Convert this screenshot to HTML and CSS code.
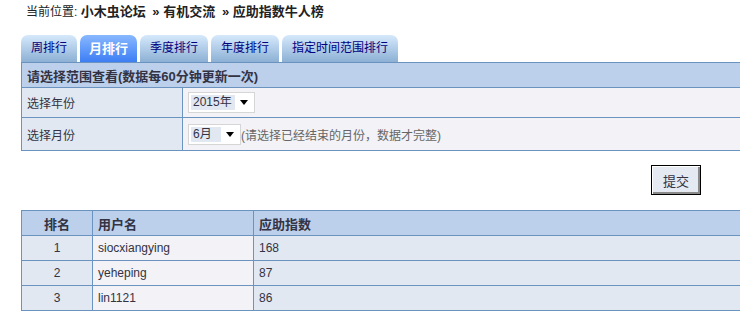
FILE: index.html
```html
<!DOCTYPE html>
<html lang="zh-CN">
<head>
    <meta charset="UTF-8">
    <title>应助指数牛人榜</title>
    <link rel="stylesheet" href="styles.css">
</head>
<body>
    <div class="crumb">当前位置: <b>小木虫论坛</b> &nbsp;<b>» 有机交流</b> &nbsp;<b>» 应助指数牛人榜</b></div>

    <div class="wrap">
        <div class="tabs">
            <a class="tab">周排行</a>
            <a class="tab active">月排行</a>
            <a class="tab">季度排行</a>
            <a class="tab">年度排行</a>
            <a class="tab">指定时间范围排行</a>
        </div>

        <table class="form">
            <tr>
                <th colspan="2">请选择范围查看(数据每60分钟更新一次)</th>
            </tr>
            <tr>
                <td class="label">选择年份</td>
                <td class="value">
                    <span class="select year"><span class="picked">2015年</span><i class="arrow"></i></span>
                </td>
            </tr>
            <tr>
                <td class="label">选择月份</td>
                <td class="value tall">
                    <span class="select month"><span class="picked">6月</span><i class="arrow"></i></span><span class="note">(请选择已经结束的月份，数据才完整)</span>
                </td>
            </tr>
        </table>

        <div class="actions">
            <button class="submit">提交</button>
        </div>

        <table class="rank">
            <tr>
                <th class="num">排名</th>
                <th class="user">用户名</th>
                <th>应助指数</th>
            </tr>
            <tr>
                <td class="num">1</td>
                <td class="user">siocxiangying</td>
                <td>168</td>
            </tr>
            <tr>
                <td class="num">2</td>
                <td class="user">yeheping</td>
                <td>87</td>
            </tr>
            <tr>
                <td class="num">3</td>
                <td class="user">lin1121</td>
                <td>86</td>
            </tr>
        </table>
    </div>
</body>
</html>
```

FILE: styles.css
```css
body {
    margin: 0;
    font-family: "Liberation Sans", "Noto Sans CJK SC", sans-serif;
    font-size: 12px;
    color: #333344;
    background-color: #fff;
    overflow: hidden;
}

b, th {
    font-size: 13px;
}

.crumb {
    padding: 4px 0 0 26px;
    line-height: 16px;
    color: #222;
}

.wrap {
    margin-left: 21px;
    width: 740px;
}

/* tabs */
.tabs {
    display: flex;
    gap: 3px;
    margin-top: 15px;
    height: 27px;
}

.tab {
    padding: 0 10px;
    line-height: 27px;
    border-radius: 7px 7px 0 0;
    background: linear-gradient(#d6e9fc, #8cb0d4);
    color: #000080;
    cursor: pointer;
}

.tab.active {
    padding: 0 9px;
    background: linear-gradient(#88b8ff, #3d7ef4);
    color: #fff;
    font-size: 13px;
    font-weight: bold;
}

/* range form */
table {
    border-collapse: collapse;
    width: 740px;
}

th, td {
    border: 1px solid #6b93bf;
    text-align: left;
    padding: 0 5px;
}

.form th {
    height: 24px;
    background-color: #bccfeb;
    font-weight: bold;
    color: #333344;
}

.form td {
    height: 29px;
}

.form td.tall {
    height: 32px;
}

.form .label {
    width: 150px;
    background-color: #e1e8f1;
}

.form .value {
    background-color: #f2f2f7;
}

.select {
    display: inline-flex;
    align-items: center;
    vertical-align: middle;
    height: 19px;
    border: 1px solid #d6d6d6;
    background-color: #fff;
    padding: 0 2px;
}

.select.year {
    width: 61px;
}

.select.month {
    width: 47px;
}

.picked {
    background-color: #e1e8f1;
    line-height: 15px;
    padding: 0 3px 0 2px;
    flex: 1;
}

.arrow {
    width: 0;
    height: 0;
    margin: 0 4px 0 5px;
    border-left: 4px solid transparent;
    border-right: 4px solid transparent;
    border-top: 5px solid #000;
}

.note {
    color: #666;
    vertical-align: middle;
}

/* submit */
.actions {
    width: 680px;
    text-align: right;
    padding: 14px 0 15px;
}

.submit {
    width: 50px;
    height: 30px;
    margin: 0;
    font-family: inherit;
    font-size: 13px;
    color: #333344;
    background-color: #e4e9f2;
    border: 1px solid #000;
    box-shadow: inset 1px 1px #fff, inset -2px -2px #8a8a8a;
    cursor: pointer;
}

/* ranking */
.rank th {
    height: 24px;
    background-color: #bccfeb;
    font-weight: bold;
    color: #333344;
}

.rank td {
    height: 24px;
    background-color: #e1e8f1;
}

.rank .num {
    width: 60px;
    text-align: center;
}

.rank .user {
    width: 150px;
}

.rank td.user {
    background-color: #f2f2f7;
}
```
